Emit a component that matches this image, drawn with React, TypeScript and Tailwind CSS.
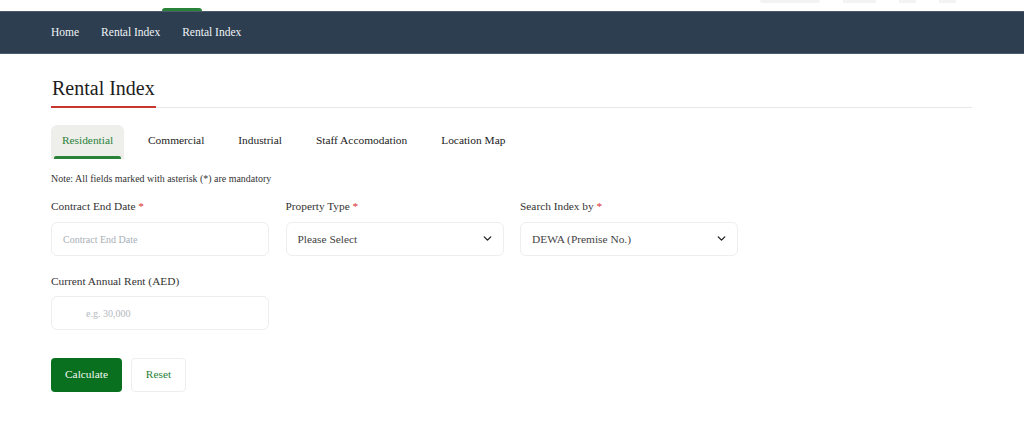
import React from "react";
import { ChevronDown } from "lucide-react";

const serif = "font-['Liberation_Serif','Times_New_Roman',serif]";

function Req() {
  return <span className="text-[#d9302a]"> *</span>;
}

function Field({ label, req, className, children }: { label: string; req?: boolean; className?: string; children: React.ReactNode }) {
  return (
    <div className={"flex w-[218px] flex-col " + (className ?? "")}>
      <div className="h-[18px] text-[11.35px] leading-[18px] text-[#333]">
        {label}
        {req && <Req />}
      </div>
      {children}
    </div>
  );
}

function Box({ children, className }: { children: React.ReactNode; className?: string }) {
  return (
    <div className={"flex h-[34px] items-center rounded-[6px] border border-[#eceef0] bg-white " + (className ?? "")}>
      {children}
    </div>
  );
}

export default function App() {
  const tabs = ["Commercial", "Industrial", "Staff Accomodation", "Location Map"];
  return (
    <div className={"relative h-[444px] w-[1024px] overflow-hidden bg-white " + serif}>
      <div className="flex h-[11px] items-end pl-[162px]">
        <div className="h-[3px] w-[40px] rounded-t-[4px] bg-[#2a8239]" />
        <div className="ml-[558px] flex h-[11px] items-start gap-[23px]">
          <div className="h-[3px] w-[60px] rounded-b-[3px] bg-[#f3f3f3]" />
          <div className="h-[3px] w-[33px] bg-[#f3f3f3]" />
          <div className="h-[3px] w-[17px] bg-[#f3f3f3]" />
          <div className="h-[3px] w-[17px] bg-[#f3f3f3]" />
        </div>
      </div>
      <nav className="flex h-[43px] items-center gap-[22px] border-y border-y-[#4d5c6c] bg-[#2c3e50] pl-[51px] text-[11.5px] text-[#f1f3f5]">
        <span>Home</span>
        <span>Rental Index</span>
        <span>Rental Index</span>
      </nav>
      <main className="mx-[51px] w-[921px]">
        <div className="mt-[20px] flex h-[34px] items-start border-b border-[#e8e8e8]">
          <h1 className="h-[34px] border-b-2 border-[#c8372d] px-[1px] text-[20px] leading-[28px] text-[#1d1d1d]">Rental Index</h1>
        </div>
        <div className="mt-[17px] flex h-[34px] items-start text-[11.4px] text-[#222]">
          <div className="relative flex h-[34px] w-[73px] items-center justify-center rounded-t-[6px] bg-[#eeeeea] pb-[3px] text-[#2a8239]">
            Residential
            <div className="absolute bottom-0 left-[3px] right-[3px] h-[3px] rounded-t-[2px] bg-[#2a8239]" />
          </div>
          {tabs.map((t, i) => (
            <div key={t} className={"flex h-[34px] items-center pb-[3px] " + (i === 0 ? "ml-[24px]" : "ml-[34px]")}>
              {t}
            </div>
          ))}
        </div>
        <p className="mt-[14px] h-[12px] text-[9.95px] leading-[12px] text-[#333]">Note: All fields marked with asterisk (*) are mandatory</p>
        <div className="mt-[12px] flex gap-[16.5px]">
          <Field label="Contract End Date" req>
            <Box className="mt-[7px] pl-[11px] text-[10px] text-[#a9afb8]">Contract End Date</Box>
          </Field>
          <Field label="Property Type" req>
            <Box className="mt-[7px] justify-between pl-[11px] pr-[9px] text-[11.4px] text-[#444]">
              <span className="pt-[1px]">Please Select</span>
              <ChevronDown size={13} strokeWidth={2.5} className="-mt-[1px] text-[#222]" />
            </Box>
          </Field>
          <Field label="Search Index by" req>
            <Box className="mt-[7px] justify-between pl-[11px] pr-[9px] text-[11.4px] text-[#444]">
              <span className="pt-[1px]">DEWA (Premise No.)</span>
              <ChevronDown size={13} strokeWidth={2.5} className="-mt-[1px] text-[#222]" />
            </Box>
          </Field>
        </div>
        <Field label="Current Annual Rent (AED)" className="mt-[16px]">
          <Box className="mt-[6px] pl-[34px] text-[10px] text-[#b4b8be]">e.g. 30,000</Box>
        </Field>
        <div className="mt-[28px] flex gap-[9px] text-[11.4px]">
          <button className="h-[34px] w-[71px] rounded-[4px] bg-[#08701f] text-[#f2f7f2]">Calculate</button>
          <button className="h-[34px] w-[55px] rounded-[4px] border border-[#eceef0] bg-white text-[#2a8239]">Reset</button>
        </div>
      </main>
    </div>
  );
}
